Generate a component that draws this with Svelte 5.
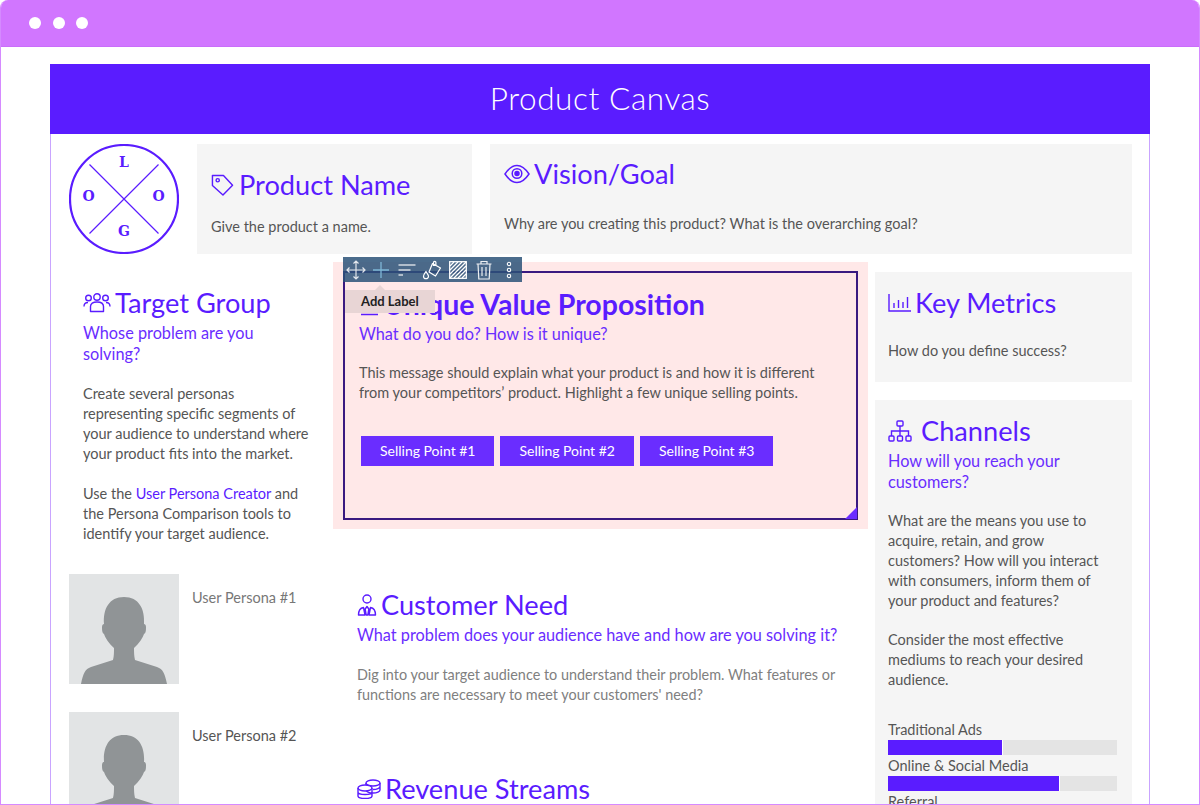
<script>
	const bars = [
		{ label: 'Traditional Ads', value: 50 },
		{ label: 'Online & Social Media', value: 75 },
		{ label: 'Referral', value: 40 }
	];
	const sellingPoints = ['Selling Point #1', 'Selling Point #2', 'Selling Point #3'];
	const personas = ['User Persona #1', 'User Persona #2'];
</script>

<div class="window">
	<div class="titlebar">
		<span class="dot"></span>
		<span class="dot"></span>
		<span class="dot"></span>
	</div>
	<div class="page">
		<div class="canvas">
			<header class="banner">Product Canvas</header>
			<div class="top-row">
				<svg class="logo" viewBox="0 0 110 110" width="110" height="110">
					<circle cx="55" cy="55" r="54" fill="none" stroke="#5a1cff" stroke-width="2.200" />
					<path d="M20.500 20.500L89.500 89.500M89.500 20.500L20.500 89.500" stroke="#5a1cff" stroke-width="1.200" />
					<text x="55" y="23" class="logo-letter">L</text>
					<text x="19.500" y="57" class="logo-letter">O</text>
					<text x="89.500" y="57" class="logo-letter">O</text>
					<text x="55" y="92" class="logo-letter">G</text>
				</svg>
				<section class="card name-card">
					<h2>
						<svg class="icon" width="23" height="23" viewBox="0 0 24 24" fill="none" stroke="#5a1cff" stroke-width="1.500" stroke-linejoin="round">
							<path d="M1.500 1.500h11.500l9.500 10.200-10 10.300L1.500 12z" />
							<circle cx="7" cy="6.500" r="1.700" />
						</svg>
						Product Name
					</h2>
					<p>Give the product a name.</p>
				</section>
				<section class="card vision-card">
					<h2>
						<svg class="icon" width="26" height="20" viewBox="0 0 26 20" fill="none" stroke="#5a1cff" stroke-width="1.500">
							<path d="M1 10C5 4 9 1.500 13 1.500S21 4 25 10c-4 6-8 8.500-12 8.500S5 16 1 10z" />
							<circle cx="13" cy="9.500" r="4.800" />
							<circle cx="13" cy="9.500" r="2" fill="#5a1cff" />
						</svg>
						Vision/Goal
					</h2>
					<p>Why are you creating this product? What is the overarching goal?</p>
				</section>
			</div>

			<div class="columns">
				<div class="left">
					<section class="target">
						<h2>
							<svg class="icon" width="28" height="20" viewBox="0 0 28 20" fill="none" stroke="#5a1cff" stroke-width="1.400">
								<circle cx="5.500" cy="5" r="2.800" />
								<circle cx="14" cy="4" r="3.200" />
								<circle cx="22.500" cy="5" r="2.800" />
								<path d="M1 13.500c0-3 2-4 4-4M27 13.500c0-3-2-4-4-4" />
								<path d="M7.500 18.500v-5c0-3 2.500-4.500 6.500-4.500s6.500 1.500 6.500 4.500v5z" stroke-linejoin="round" />
							</svg>
							Target Group
						</h2>
						<h3>Whose problem are you solving?</h3>
						<p>Create several personas representing specific segments of your audience to understand where your product fits into the market.</p>
						<p>Use the <span class="link">User Persona Creator</span> and the Persona Comparison tools to identify your target audience.</p>
					</section>
					<div class="personas">
						{#each personas as name}
							<div class="persona">
								<svg class="avatar" viewBox="0 0 110 110" width="110" height="110">
									<rect width="110" height="110" fill="#e2e4e5" />
									<path d="M12 110C14 100 16 95 22 93L44 86C45 82 45 78 45 74C40 70 36 63 35 60C33 59 33 56 33 53C33 51 34 50 35 50C34 35 40 23 55 23C70 23 76 35 75 50C76 50 77 51 77 53C77 56 77 59 75 60C74 63 70 70 65 74C65 78 65 82 66 86L88 93C94 95 96 100 98 110Z" fill="#909496" />
								</svg>
								<span>{name}</span>
							</div>
						{/each}
					</div>
				</div>

				<div class="middle">
					<div class="selected">
						<div class="toolbar">
							<svg width="20" height="20" viewBox="0 0 20 20" fill="none" stroke="#fff" stroke-width="1.200" opacity=".85">
								<path d="M10 1v18M1 10h18M7.500 3.500L10 1l2.500 2.500M7.500 16.500L10 19l2.500-2.500M3.500 7.500L1 10l2.500 2.500M16.500 7.500L19 10l-2.500 2.500" />
							</svg>
							<svg width="20" height="20" viewBox="0 0 20 20" fill="none" stroke="#7db6d6" stroke-width="1.300">
								<path d="M10 2v16M2 10h16" />
							</svg>
							<svg width="20" height="20" viewBox="0 0 20 20" fill="none" stroke="#fff" stroke-width="1.300" opacity=".75">
								<path d="M1.500 5h17M1.500 10h12M1.500 15h4.500" />
							</svg>
							<svg width="20" height="20" viewBox="0 0 20 20" fill="none" stroke="#fff" stroke-width="1.200">
								<path d="M10.500 3.500l8 4.500-5 8-6.500-4zM11.500 6V2.500a1.200 1.200 0 0 1 2.400 0V5" stroke-linejoin="round" />
								<path d="M4 11.500c-1.500 2-2.500 3.300-2.500 4.700a2.500 2.500 0 0 0 5 0C6.500 15 5.200 13.500 4 11.500z" />
							</svg>
							<svg width="18" height="18" viewBox="0 0 18 18" fill="none" stroke="#fff" stroke-width="1.300">
								<rect x="0.700" y="0.700" width="16.600" height="16.600" />
								<path d="M1 5l4-4M1 9l8-8M1 13l12-12M1 17L17 1M5 17L17 5M9 17l8-8M13 17l4-4" />
							</svg>
							<svg width="18" height="20" viewBox="0 0 18 20" fill="none" stroke="#fff" stroke-width="1.200" opacity=".9">
								<path d="M1.500 4h15M6 4V1.500h6V4M3 4l.8 15h10.400L15 4M7 7v9M11 7v9" />
							</svg>
							<svg width="6" height="18" viewBox="0 0 6 18" fill="none" stroke="#fff" stroke-width="1.100">
								<circle cx="3" cy="3" r="1.700" />
								<circle cx="3" cy="9" r="1.700" />
								<circle cx="3" cy="15" r="1.700" />
							</svg>
						</div>
						<div class="tooltip">Add Label</div>
						<div class="selected-inner">
							<h2 class="bold">
								<svg class="icon" width="20" height="24" viewBox="0 0 20 24" fill="none" stroke="#5a1cff" stroke-width="1.500">
									<path d="M2 22.500h17" />
								</svg>
								Unique Value Proposition
							</h2>
							<h3>What do you do? How is it unique?</h3>
							<p>This message should explain what your product is and how it is different from your competitors’ product. Highlight a few unique selling points.</p>
							<div class="points">
								{#each sellingPoints as point}
									<span class="point">{point}</span>
								{/each}
							</div>
							<div class="handle"></div>
						</div>
					</div>

					<section class="need">
						<h2>
							<svg class="icon" width="20" height="22" viewBox="0 0 20 22" fill="none" stroke="#5a1cff" stroke-width="1.400" stroke-linejoin="round">
								<circle cx="10" cy="5" r="4" />
								<path d="M1.500 21c0-4 2-7 5-7.500L8 21zM18.500 21c0-4-2-7-5-7.500L12 21zM10 12.500l1.800 2.500-1 6H9.200l-1-6z" />
							</svg>
							Customer Need
						</h2>
						<h3>What problem does your audience have and how are you solving it?</h3>
						<p>Dig into your target audience to understand their problem. What features or functions are necessary to meet your customers' need?</p>
					</section>

					<section class="revenue">
						<h2>
							<svg class="icon" width="24" height="20" viewBox="0 0 24 20" fill="none" stroke="#5a1cff" stroke-width="1.400">
								<ellipse cx="16" cy="4" rx="7" ry="3" />
								<path d="M9 4v7c0 1.500 3 3 7 3s7-1.500 7-3V4M23 7.500c0 1.500-3 3-7 3" />
								<ellipse cx="8" cy="9" rx="7" ry="3" fill="#fff" />
								<path d="M1 9v8c0 1.500 3 2.500 7 2.500s7-1 7-2.500V9M1 13c0 1.500 3 2.500 7 2.500s7-1 7-2.500" />
							</svg>
							Revenue Streams
						</h2>
					</section>
				</div>

				<div class="right">
					<section class="card metrics">
						<h2>
							<svg class="icon" width="23" height="18" viewBox="0 0 23 18" fill="none" stroke="#5a1cff" stroke-width="1.400">
								<path d="M1 0v17h22M6 9v5M10.500 6v8M15 8v6M19.500 3v11" />
							</svg>
							Key Metrics
						</h2>
						<p>How do you define success?</p>
					</section>
					<section class="card channels">
						<h2>
							<svg class="icon" width="24" height="22" viewBox="0 0 24 22" fill="none" stroke="#5a1cff" stroke-width="1.400">
								<rect x="9" y="1" width="6" height="5" rx="1" />
								<rect x="1" y="16" width="5" height="5" rx="1" />
								<rect x="9.500" y="16" width="5" height="5" rx="1" />
								<rect x="18" y="16" width="5" height="5" rx="1" />
								<path d="M12 6v10M3.500 16v-5h17v5" />
							</svg>
							Channels
						</h2>
						<h3>How will you reach your customers?</h3>
						<p>What are the means you use to acquire, retain, and grow customers? How will you interact with consumers, inform them of your product and features?</p>
						<p>Consider the most effective mediums to reach your desired audience.</p>
						<div class="bars">
							{#each bars as bar}
								<div class="bar-label">{bar.label}</div>
								<div class="bar"><div class="bar-fill" style="width: {bar.value}%"></div></div>
							{/each}
						</div>
					</section>
				</div>
			</div>
		</div>
	</div>
</div>

<style>
	:global(body) {
		background: #fff;
		overflow: hidden;
	}

	.window {
		height: 805px;
		box-sizing: border-box;
		border: 1px solid #d58aff;
		border-top: 0;
		border-radius: 8px 8px 0 0;
		overflow: hidden;
		font-family: 'Lato', 'Open Sans', sans-serif;
		color: #555;
		display: flex;
		flex-direction: column;
	}

	.titlebar {
		height: 47px;
		box-sizing: border-box;
		flex: none;
		background: #d176ff;
		display: flex;
		align-items: center;
		gap: 11.500px;
		padding: 0 0 0 28px;
		border-bottom: 1px solid #c96dfa;
	}

	.dot {
		width: 12px;
		height: 12px;
		border-radius: 50%;
		background: #fff;
	}

	.page {
		flex: 1;
		min-height: 0;
		padding: 17px 49px 0;
		overflow: hidden;
	}

	.canvas {
		border: 1px solid #c9a4ff;
		border-top: 0;
		border-bottom: 0;
		height: 100%;
	}

	.banner {
		height: 70px;
		box-sizing: border-box;
		padding-bottom: 2px;
		margin: 0 -1px;
		background: #5a1cff;
		color: #fff;
		font-size: 31.500px;
		font-weight: 300;
		letter-spacing: 0.6px;
		display: flex;
		align-items: center;
		justify-content: center;
	}

	.top-row {
		display: flex;
		padding: 10px 17px 0 18px;
	}

	.logo {
		flex: none;
		margin-right: 18px;
	}

	.logo-letter {
		font-family: 'DejaVu Serif', 'Liberation Serif', serif;
		font-weight: 700;
		font-size: 14px;
		fill: #5a1cff;
		text-anchor: middle;
	}

	.card {
		background: #f5f5f5;
		box-sizing: border-box;
	}

	h2 {
		margin: 0;
		font-size: 27.200px;
		font-weight: 400;
		line-height: 34px;
		color: #5a1cff;
		display: flex;
		align-items: center;
		gap: 4px;
		white-space: nowrap;
	}

	h3 {
		margin: 2px 0 0;
		font-size: 16.300px;
		font-weight: 400;
		line-height: 21px;
		color: #6a2dff;
	}

	p {
		margin: 0;
		font-size: 14.500px;
		line-height: 20px;
		color: #555;
	}

	.icon {
		flex: none;
	}

	.name-card {
		width: 275px;
		height: 110px;
		padding: 24px 14px 0;
	}

	.name-card h2 {
		gap: 5px;
	}

	.name-card p {
		margin-top: 15px;
	}

	.vision-card {
		margin-left: 18px;
		flex: 1;
		height: 110px;
		padding: 13px 14px 0;
	}

	.vision-card p {
		margin-top: 23px;
	}

	.columns {
		display: grid;
		grid-template-columns: 264px 542px 257px;
		padding: 8px 17px 0 18px;
	}

	.left {
		padding-top: 24px;
		width: 247px;
	}

	.target {
		padding-left: 14px;
	}

	.target p {
		margin-top: 20px;
	}

	.target h3 {
		width: 190px;
	}

	.link {
		color: #5a1cff;
	}

	.personas {
		margin-top: 30px;
		display: flex;
		flex-direction: column;
		gap: 28px;
	}

	.persona {
		display: flex;
		gap: 13px;
		font-size: 14.500px;
		line-height: 20px;
		color: #555;
	}

	.persona:first-child {
		color: #777;
	}

	.persona span {
		padding-top: 14px;
	}

	.avatar {
		flex: none;
	}

	.selected {
		position: relative;
		width: 535px;
		height: 267px;
		box-sizing: border-box;
		background: #ffe8e8;
		padding: 9px 10px;
	}

	.toolbar {
		position: absolute;
		left: 10px;
		top: -5px;
		width: 179px;
		height: 25px;
		background: rgba(44, 82, 120, 0.85);
		display: grid;
		grid-template-columns: repeat(7, 1fr);
		justify-items: center;
		align-items: center;
		z-index: 2;
	}

	.tooltip {
		position: absolute;
		left: 12px;
		top: 28px;
		width: 90px;
		height: 23px;
		background: #e8d5d5;
		color: #222;
		font-size: 13px;
		font-weight: 700;
		line-height: 22px;
		padding-left: 16px;
		box-sizing: border-box;
		z-index: 2;
	}

	.tooltip::before {
		content: '';
		position: absolute;
		left: 30px;
		top: -5px;
		border: 5px solid transparent;
		border-top: 0;
		border-bottom-color: #e8d5d5;
	}

	.selected-inner {
		position: relative;
		height: 100%;
		box-sizing: border-box;
		border: 2px solid #3a1a80;
		padding: 14px 14px 0;
	}

	.bold {
		font-weight: 700;
		font-size: 28.500px;
	}

	.selected-inner p {
		margin-top: 19px;
	}

	.points {
		display: flex;
		gap: 6px;
		margin-top: 33px;
		margin-left: 2px;
	}

	.point {
		background: #6a2dff;
		color: #fff;
		font-size: 14px;
		height: 30px;
		line-height: 30px;
		padding: 0 19px;
	}

	.handle {
		position: absolute;
		right: -1px;
		bottom: -1px;
		width: 0;
		height: 0;
		border-left: 12px solid transparent;
		border-bottom: 12px solid #6a2dff;
	}

	.need {
		margin-top: 59px;
		padding-left: 24px;
	}

	.need p {
		margin-top: 20px;
		color: #808080;
		font-size: 14.400px;
	}

	.revenue {
		margin-top: 67px;
		padding-left: 24px;
	}

	.right {
		display: flex;
		flex-direction: column;
		gap: 18px;
		padding-top: 10px;
	}

	.metrics {
		height: 110px;
		padding: 14px 13px 0;
	}

	.metrics p {
		margin-top: 21px;
	}

	.channels {
		padding: 14px 13px 0;
		min-height: 500px;
	}

	.channels h2 {
		gap: 9px;
	}

	.channels h3 {
		width: 200px;
	}

	.channels p {
		margin-top: 19px;
	}

	.bars {
		margin-top: 29px;
		width: 229px;
	}

	.bar-label {
		font-size: 14.500px;
		line-height: 21px;
		color: #555;
	}

	.bar {
		height: 15px;
		background: #e4e4e4;
	}

	.bar-fill {
		height: 100%;
		background: #5a1cff;
		border-right: 1px solid #fff;
		box-sizing: border-box;
	}
</style>
